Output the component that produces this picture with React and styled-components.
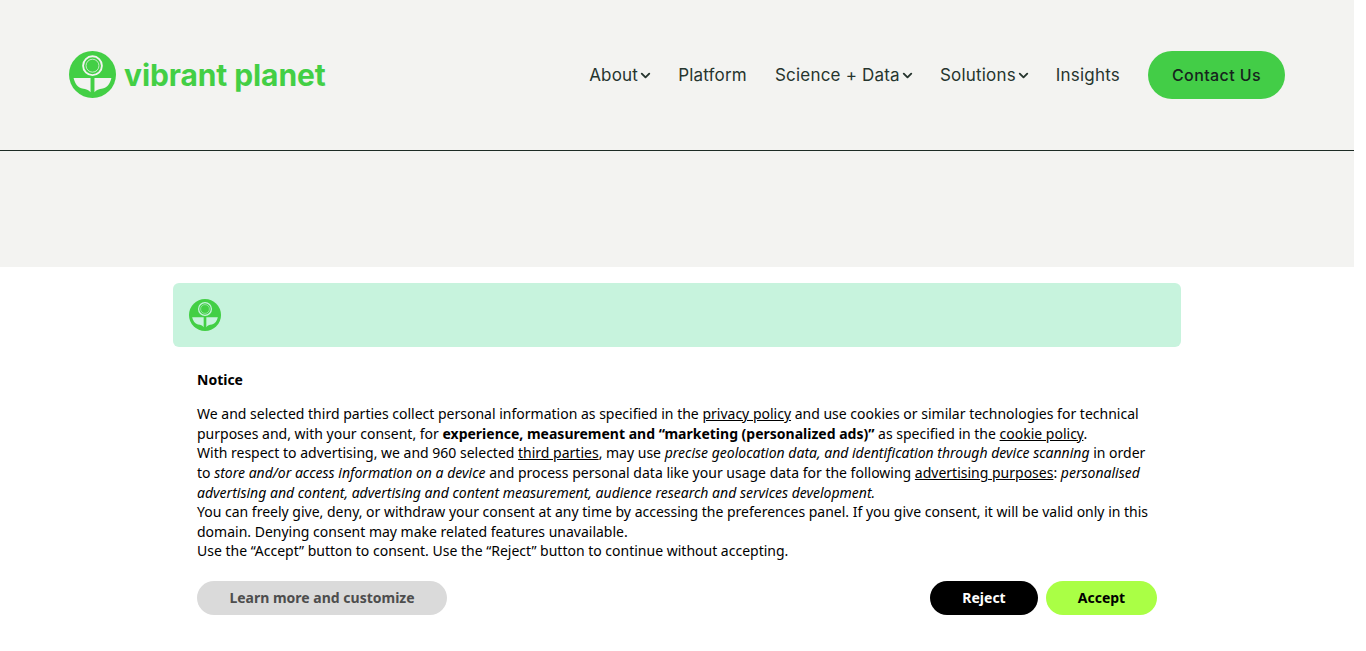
import React from "react";
import styled, { createGlobalStyle } from "styled-components";
import { ChevronDown } from "lucide-react";

const GlobalStyle = createGlobalStyle`
  html, body {
    margin: 0;
    padding: 0;
    background: #fff;
  }
`;

const LogoMark = ({ size, bg }) => (
  <svg width={size} height={size} viewBox="0 0 48 48">
    <circle cx="24" cy="24" r="24" fill="#43cf45" />
    <circle cx="24" cy="15" r="9.6" fill="none" stroke={bg} strokeWidth="1.9" />
    <circle cx="24" cy="15" r="6.6" fill="none" stroke={bg} strokeWidth="1" opacity="0.75" />
    <path d="M4.7 27.5H22V42.2C20.2 39.4 17.5 38.9 13.5 38.2C8.8 37.2 6 33 4.7 27.5Z" fill={bg} />
    <path d="M43.3 27.5H26V42.2C27.8 39.4 30.5 38.9 34.5 38.2C39.2 37.2 42 33 43.3 27.5Z" fill={bg} />
  </svg>
);

const NAV = [
  { label: "About", menu: true },
  { label: "Platform" },
  { label: "Science + Data", menu: true },
  { label: "Solutions", menu: true },
  { label: "Insights" },
];

const App = () => {
  return (
    <Page>
      <GlobalStyle />
      <Header>
        <Logo href="#">
          <LogoMark size={47} bg="#f3f3f1" />
          <LogoText>vibrant planet</LogoText>
        </Logo>
        <Nav>
          {NAV.map((item) => (
            <NavItem href="#" key={item.label}>
              {item.label}
              {item.menu && <Caret size={15} strokeWidth={3} />}
            </NavItem>
          ))}
          <ContactBtn href="#">Contact Us</ContactBtn>
        </Nav>
      </Header>
      <Hero />
      <Notice>
        <BrandBar>
          <LogoMark size={32} bg="#c7f3dd" />
        </BrandBar>
        <Content>
          <Title>Notice</Title>
          <Copy>
            We and selected third parties collect personal information as specified in the{" "}
            <a href="#">privacy policy</a> and use cookies or similar technologies for technical
            purposes and, with your consent, for{" "}
            <b>experience, measurement and “marketing (personalized ads)”</b> as specified in the{" "}
            <a href="#">cookie policy</a>.<br />
            With respect to advertising, we and 960 selected <a href="#">third parties</a>, may use{" "}
            <i>precise geolocation data, and identification through device scanning</i> in order to{" "}
            <i>store and/or access information on a device</i> and process personal data like your
            usage data for the following <a href="#">advertising purposes</a>:{" "}
            <i>
              personalised advertising and content, advertising and content measurement, audience
              research and services development.
            </i>
            <br />
            You can freely give, deny, or withdraw your consent at any time by accessing the
            preferences panel. If you give consent, it will be valid only in this domain. Denying
            consent may make related features unavailable.
            <br />
            Use the “Accept” button to consent. Use the “Reject” button to continue without
            accepting.
          </Copy>
          <Actions>
            <CustomizeBtn>Learn more and customize</CustomizeBtn>
            <RightActions>
              <RejectBtn>Reject</RejectBtn>
              <AcceptBtn>Accept</AcceptBtn>
            </RightActions>
          </Actions>
        </Content>
      </Notice>
    </Page>
  );
};

const Page = styled.div`
  width: 1354px;
  height: 651px;
  overflow: hidden;
  background: #fff;
`;

const Header = styled.header`
  box-sizing: border-box;
  height: 151px;
  padding: 0 69px;
  display: flex;
  align-items: center;
  justify-content: space-between;
  background: #f3f3f1;
  border-bottom: 1px solid #1d2b25;
`;

const Logo = styled.a`
  display: flex;
  align-items: center;
  gap: 8px;
  text-decoration: none;

  svg {
    margin-bottom: 1px;
  }
`;

const LogoText = styled.span`
  font-family: "Inter", sans-serif;
  font-size: 30px;
  font-weight: 700;
  letter-spacing: -0.1px;
  color: #43cf45;
`;

const Nav = styled.nav`
  display: flex;
  align-items: center;
  gap: 28px;
`;

const NavItem = styled.a`
  display: flex;
  align-items: center;
  font-family: "Inter", sans-serif;
  font-size: 17px;
  letter-spacing: 0.2px;
  color: #26352e;
  text-decoration: none;
`;

const Caret = styled(ChevronDown)`
  margin-right: -3px;
  flex-shrink: 0;
`;

const ContactBtn = styled.a`
  box-sizing: border-box;
  width: 137px;
  height: 48px;
  display: flex;
  align-items: center;
  justify-content: center;
  border-radius: 24px;
  background: #43cd47;
  color: #16241d;
  font-family: "Inter", sans-serif;
  font-size: 16px;
  font-weight: 500;
  letter-spacing: 0.4px;
  text-decoration: none;
`;

const Hero = styled.div`
  height: 116px;
  background: #f3f3f1;
`;

const Notice = styled.section`
  width: 1008px;
  margin: 16px 0 0 173px;
  font-family: "Noto Sans", sans-serif;
  color: #000;
`;

const BrandBar = styled.div`
  box-sizing: border-box;
  height: 64px;
  padding: 0 16px;
  display: flex;
  align-items: center;
  background: #c7f3dd;
  border-radius: 6px;
`;

const Content = styled.div`
  padding: 23px 24px 0;
`;

const Title = styled.div`
  font-size: 14px;
  font-weight: 700;
  line-height: 20px;
  margin-bottom: 14.2px;
`;

const Copy = styled.p`
  margin: 0;
  font-size: 14px;
  line-height: 19.6px;

  a {
    color: #000;
    text-decoration: underline;
  }
`;

const Actions = styled.div`
  margin-top: 19.8px;
  display: flex;
  justify-content: space-between;
`;

const RightActions = styled.div`
  display: flex;
  gap: 8px;
`;

const PillBtn = styled.button`
  box-sizing: border-box;
  height: 34px;
  padding: 0;
  border: 0;
  border-radius: 17px;
  font-family: "Noto Sans", sans-serif;
  font-size: 14px;
  font-weight: 700;
`;

const CustomizeBtn = styled(PillBtn)`
  width: 250px;
  background: #dadada;
  color: #4d4d4d;
`;

const RejectBtn = styled(PillBtn)`
  width: 108px;
  background: #000;
  color: #fff;
`;

const AcceptBtn = styled(PillBtn)`
  width: 111px;
  background: #aaff45;
  color: #000;
`;

export default App;
